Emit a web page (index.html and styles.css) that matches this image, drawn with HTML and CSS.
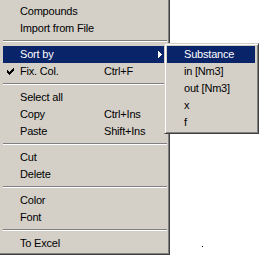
FILE: index.html
```html
<!DOCTYPE html>
<html>
<head>
    <title>Context Menu</title>
    <link rel="stylesheet" href="styles.css">
</head>
<body>
    <div class="screen">
        <div class="menu main">
            <div class="item"><span class="mark"></span><span class="label">Compounds</span></div>
            <div class="item"><span class="mark"></span><span class="label">Import from File</span></div>
            <div class="sep"></div>
            <div class="item active"><span class="mark"></span><span class="label">Sort by</span><span class="key"></span>
                <svg class="arrow" width="4" height="7" viewBox="0 0 4 7"><path d="M0 0h1v7h-1z M1 1h1v5h-1z M2 2h1v3h-1z M3 3h1v1h-1z" /></svg>
            </div>
            <div class="item"><span class="mark">
                <svg class="check" width="7" height="7" viewBox="0 0 7 7"><path d="M6 0h1v1h-1z M5 1h2v1h-2z M0 2h1v1h-1z M4 2h3v1h-3z M0 3h2v1h-2z M3 3h3v1h-3z M0 4h5v1h-5z M1 5h3v1h-3z M2 6h1v1h-1z" /></svg>
            </span><span class="label">Fix. Col.</span><span class="key">Ctrl+F</span></div>
            <div class="sep"></div>
            <div class="item"><span class="mark"></span><span class="label">Select all</span></div>
            <div class="item"><span class="mark"></span><span class="label">Copy</span><span class="key">Ctrl+Ins</span></div>
            <div class="item"><span class="mark"></span><span class="label">Paste</span><span class="key">Shift+Ins</span></div>
            <div class="sep"></div>
            <div class="item"><span class="mark"></span><span class="label">Cut</span></div>
            <div class="item"><span class="mark"></span><span class="label">Delete</span></div>
            <div class="sep"></div>
            <div class="item"><span class="mark"></span><span class="label">Color</span></div>
            <div class="item"><span class="mark"></span><span class="label">Font</span></div>
            <div class="sep"></div>
            <div class="item"><span class="mark"></span><span class="label">To Excel</span></div>
        </div>

        <div class="menu sub">
            <div class="item active"><span class="mark"></span><span class="label">Substance</span></div>
            <div class="item"><span class="mark"></span><span class="label">in [Nm3]</span></div>
            <div class="item"><span class="mark"></span><span class="label">out [Nm3]</span></div>
            <div class="item"><span class="mark"></span><span class="label">x</span></div>
            <div class="item"><span class="mark"></span><span class="label">f</span></div>
        </div>

        <span class="dot"></span>
    </div>
</body>
</html>
```

FILE: styles.css
```css
body {
    margin: 0;
    background: #ffffff;
    font-family: "Liberation Sans", Arial, sans-serif;
    font-size: 11px;
    color: #000000;
}
.screen {
    position: relative;
    width: 259px;
    height: 255px;
    overflow: hidden;
}

.menu {
    background: #d4d0c8;
    box-sizing: border-box;
    border-right: 1px solid #404040;
    border-bottom: 1px solid #404040;
    box-shadow: inset -1px -1px #808080;
}
.main {
    width: 170px;
    height: 255px;
    padding: 3px 3px 2px 3px;
}
.sub {
    position: absolute;
    left: 164px;
    top: 43px;
    width: 95px;
    padding: 2px 3px 2px 2px;
    border-left: 1px solid #d4d0c8;
    border-top: 1px solid #d4d0c8;
    box-shadow: inset 1px 1px #ffffff, inset -1px -1px #808080;
}

.item {
    display: flex;
    align-items: center;
    height: 17px;
    line-height: 17px;
    white-space: nowrap;
    letter-spacing: -0.2px;
}
.item.active {
    background: #0a246a;
    color: #ffffff;
}
.mark {
    width: 17px;
    height: 17px;
    flex: none;
    display: flex;
    align-items: center;
    padding-left: 4px;
    box-sizing: border-box;
}
.label {
    width: 84px;
    flex: none;
}
.sub .label {
    width: auto;
}
.key {
    flex: 1;
}
.check {
    display: block;
    fill: #000000;
}
.arrow {
    display: block;
    fill: #ffffff;
    margin-right: 4px;
}

.sep {
    height: 9px;
    box-sizing: border-box;
    padding-top: 3px;
}
.sep::before {
    content: "";
    display: block;
    margin-right: -1px;
    height: 1px;
    background: #808080;
    border-bottom: 1px solid #ffffff;
}

.dot {
    position: absolute;
    left: 202px;
    top: 246px;
    width: 1px;
    height: 1px;
    background: #000000;
}
```
